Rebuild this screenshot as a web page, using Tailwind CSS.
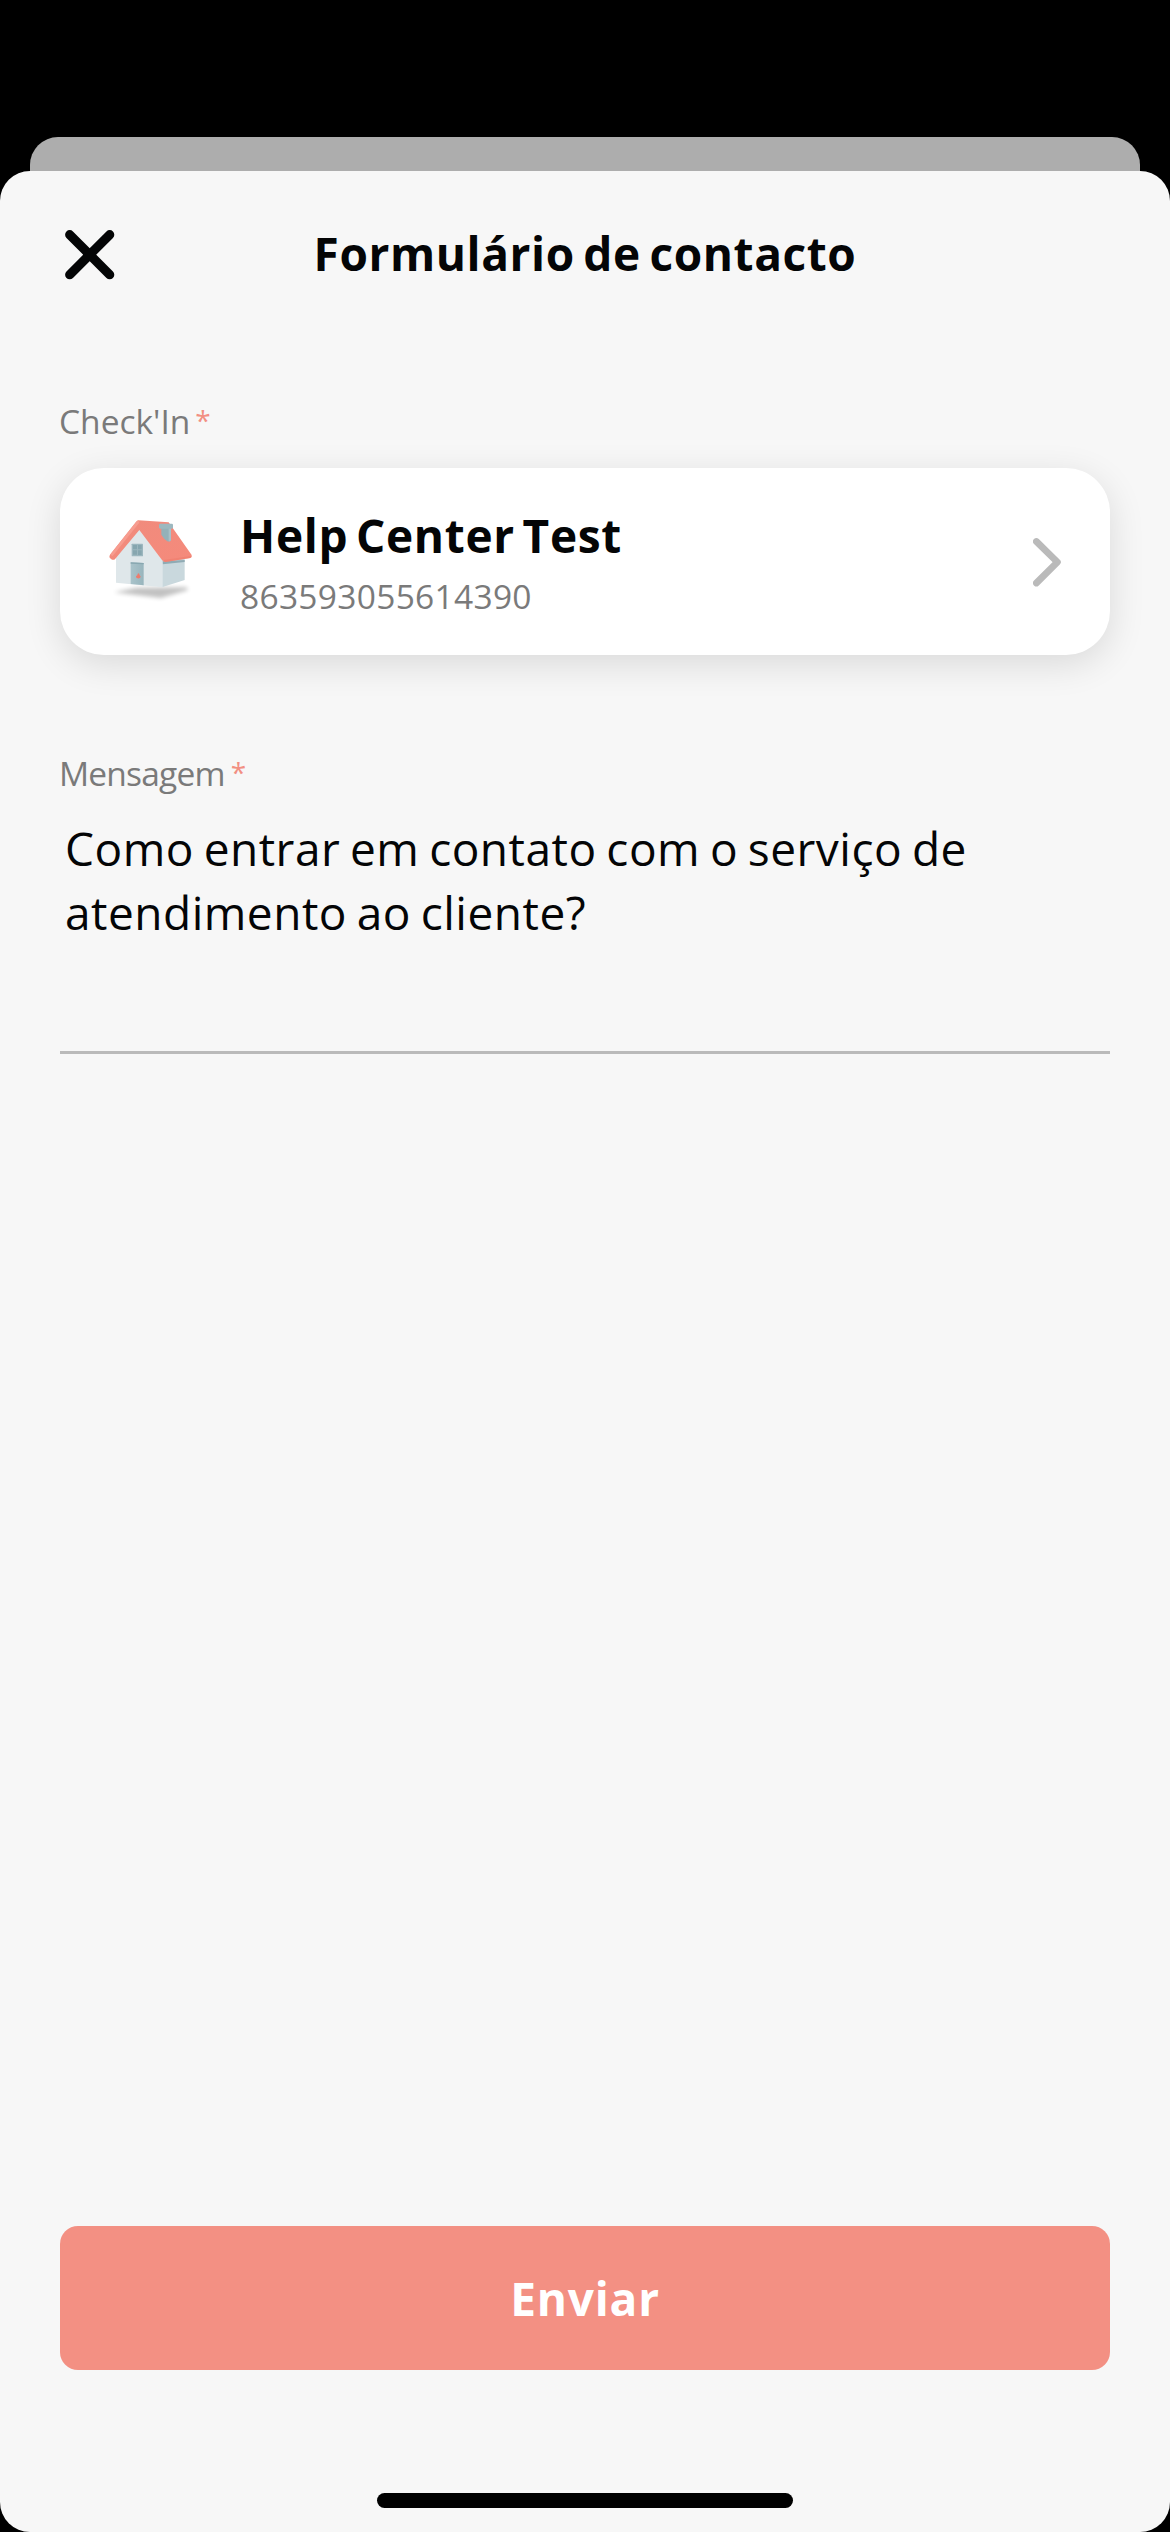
<!DOCTYPE html>
<html lang="pt">
<head>
<meta charset="utf-8">
<title>Formulário de contacto</title>
<script src="https://cdn.jsdelivr.net/npm/@tailwindcss/browser@4"></script>
</head>
<body class="bg-black">
<div class="flex h-[2532px] w-[1170px] flex-col overflow-hidden bg-black pt-[137px] font-['Open_Sans',sans-serif] text-[#040506]">
  <div class="mx-[30px] h-[34px] shrink-0 rounded-t-[28px] bg-[#adadad]"></div>
  <main class="flex flex-1 flex-col rounded-[30px] bg-[#f7f7f7] px-[60px]">
    <header class="grid h-[164px] grid-cols-[50px_1fr_50px] items-center">
      <button aria-label="Fechar" class="mt-1 ml-[5px]">
        <svg class="block h-[50px] w-[50px]" viewBox="0 0 50 50" fill="none" stroke="#040506" stroke-width="9.2" stroke-linecap="round"><path d="M4.7 4.7 44.7 44.7M44.7 4.7 4.7 44.7"/></svg>
      </button>
      <h1 class="text-center text-[46px] leading-[64px] font-bold tracking-[0.6px] whitespace-nowrap [word-spacing:-4px]">Formulário de contacto</h1>
    </header>

    <label class="mt-[62px] -ml-px flex h-12 gap-[5px] text-[33.5px] leading-[48px] text-[#7a7a7a]">Check'In<span class="text-[28px] leading-[47px] text-[#f28f82]">*</span></label>
    <section class="mt-[23px] flex h-[187px] items-center rounded-[44px] bg-white pr-[49px] pl-[30px] shadow-[0_9px_36px_rgba(0,0,0,0.12)]">
      <svg class="-mt-[3px] h-[120px] w-[120px] shrink-0" viewBox="0 0 360 360">
        <defs>
          <filter id="soft" x="-20%" y="-50%" width="140%" height="200%"><feGaussianBlur stdDeviation="7"/></filter>
          <linearGradient id="roof" x1="0" y1="0" x2="1" y2="1"><stop offset="0" stop-color="#f08b7d"/><stop offset="1" stop-color="#f58a7b"/></linearGradient>
          <linearGradient id="door" x1="0" y1="0" x2="1" y2="0"><stop offset="0" stop-color="#a9c3ca"/><stop offset="1" stop-color="#98b5bd"/></linearGradient>
        </defs>
        <path d="M72 277 140 263 290 262 294 270 212 294Z" fill="#000" opacity=".24" filter="url(#soft)"/>
        <path d="M216 180 284 176V240L216 262Z" fill="#c9d8dd"/>
        <path d="M216 184 284 180V186L218 193Z" fill="#8fabb4"/>
        <path d="M78 172 144 82 218 180V262L78 248Z" fill="#dfe7ea"/>
        <path d="M145 61 236 67 305 165Q307 171 301 174L226 186Q220 186 216 180L148 90 76 176Q71 182 64 178L59 173Q57 168 60 164L138 66Q141 61 145 61Z" fill="url(#roof)"/>
        <path d="M222 180 302 168 305 170Q304 173 301 174L226 186Q221 185 222 180Z" fill="#ef7d6d" opacity=".6"/>
        <path d="M60 164 138 66 145 61 148 68 68 168Z" fill="#f79c8f"/>
        <path d="M214 80 243 82 243 120Q241 126 232 124Q222 118 214 104Z" fill="#94b1b9"/>
        <path d="M236 82H243V120Q241 125 236 124Z" fill="#a9c0c7"/>
        <rect x="207" y="71" width="42" height="15" rx="4" fill="#9db8bf"/>
        <rect x="125" y="131" width="34" height="38" rx="2" fill="#9bb6be"/>
        <path d="M129 135h12v13h-12zM144 135h11v13h-11zM129 151h12v13h-12zM144 151h11v14h-11z" fill="#86a6af"/>
        <path d="M122 187 161 189V256L122 252Z" fill="url(#door)"/>
        <path d="M122 187 161 189V193L122 191Z" fill="#88a7b0"/>
        <path d="M145 220Q148 220 149 226 155 230 150 234 142 237 138 232 137 227 142 226 142 221 145 220Z" fill="#ee7b6c"/>
      </svg>
      <div class="ml-[30px] flex-1">
        <h2 class="text-[46px] leading-[60px] font-bold tracking-[0.7px] whitespace-nowrap [word-spacing:-5px]">Help Center Test</h2>
        <p class="mt-[9px] text-[33.5px] leading-[44px] tracking-[0.3px] text-[#7a7a7a]">863593055614390</p>
      </div>
      <svg class="h-[50px] w-7 shrink-0" viewBox="0 0 28 50" fill="none" stroke="#bababa" stroke-width="6.8" stroke-linecap="round" stroke-linejoin="round"><path d="M3.4 4.5 24.4 25.2 3.4 46"/></svg>
    </section>

    <label class="mt-[94px] -ml-px flex h-12 gap-[6px] text-[33.5px] leading-[48px] tracking-[-0.8px] text-[#7a7a7a]">Mensagem<span class="text-[28px] leading-[47px] text-[#f28f82]">*</span></label>
    <div class="mt-[19px] h-[238px] border-b-[3px] border-[#bababa] pl-[5px] text-[46px] leading-[64px] tracking-[0.5px] whitespace-nowrap [word-spacing:-2.7px]">Como entrar em contato com o serviço de<br>atendimento ao cliente?</div>

    <button class="mt-auto h-36 rounded-[18px] bg-[#f39083] text-[46px] font-bold tracking-[0.8px] text-white">Enviar</button>
    <div class="mx-auto mt-[123px] mb-6 h-[15px] w-[416px] shrink-0 rounded-full bg-black"></div>
  </main>
</div>
</body>
</html>
